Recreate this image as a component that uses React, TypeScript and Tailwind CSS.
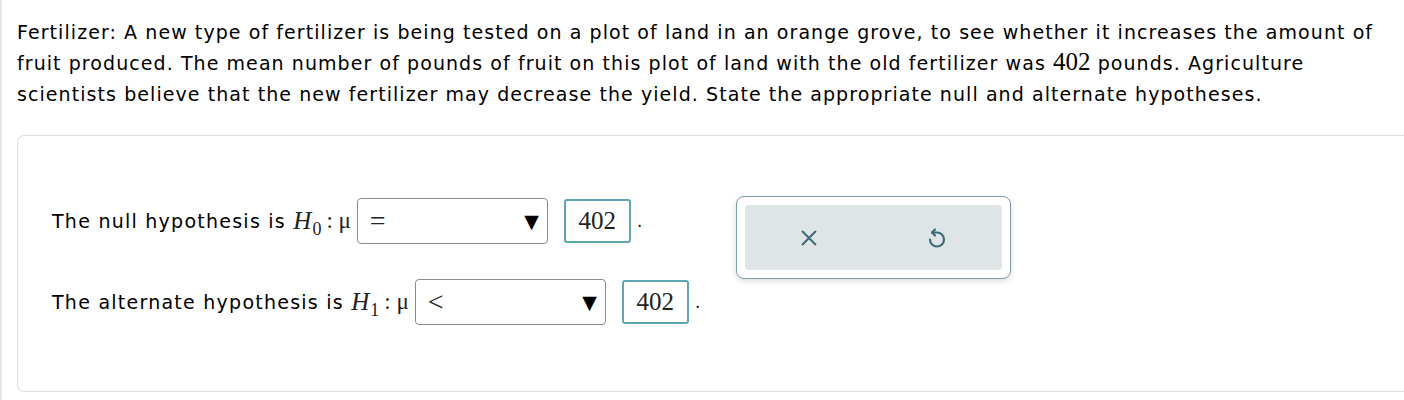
import React from 'react';

function Select({ value }: { value: string }) {
    return (
        <div className="w-[191px] h-[46px] rounded-[4px] border border-[#8c8c8c] bg-white flex items-center justify-between pl-[12px] pr-[8px]">
            <span className="text-[28px] leading-none text-[#222] font-['Liberation_Serif',serif]">{value}</span>
            <span className="text-[19px] text-black leading-none font-['DejaVu_Sans',sans-serif]">▼</span>
        </div>
    );
}

function NumBox({ value }: { value: string }) {
    return (
        <div className="flex items-end">
            <div className="w-[67px] h-[44px] rounded-[3px] border-2 border-[#5fa6b3] flex items-center justify-center text-[25px] text-[#222] font-['Liberation_Serif',serif]">
                {value}
            </div>
            <span className="ml-[6px] mb-[9px] text-[18px] text-[#222]">.</span>
        </div>
    );
}

function Hyp({ label, sub, op }: { label: string; sub: string; op: string }) {
    return (
        <div className="flex items-center">
            <span className="text-[19px] tracking-[1.25px] text-black">{label}&nbsp;</span>
            <span className="text-[25px] italic text-[#222] font-['Liberation_Serif',serif]">H</span>
            <sub className="text-[18px] text-[#222] relative top-[8px] ml-[1px] mr-[5px] font-['Liberation_Serif',serif]">{sub}</sub>
            <span className="text-[23px] text-[#222] mr-[6px] font-['Liberation_Serif',serif]">: μ</span>
            <Select value={op} />
            <div className="ml-[16px]">
                <NumBox value="402" />
            </div>
        </div>
    );
}

export default function App() {
    return (
        <div className="w-[1404px] h-[400px] bg-white overflow-hidden flex font-['DejaVu_Sans',Verdana,sans-serif]">
            <div className="w-[2px] bg-[#e6e6e6] shrink-0" />
            <div className="flex-1 pl-[15px] pt-[17px]">
                <p className="text-[19px] leading-[31px] tracking-[1.07px] text-black whitespace-nowrap">
                    Fertilizer: A new type of fertilizer is being tested on a plot of land in an orange grove, to see whether it increases the amount of<br />
                    fruit produced. The mean number of pounds of fruit on this plot of land with the old fertilizer was <span className="text-[25px] leading-none tracking-normal font-['Liberation_Serif',serif]">402</span> pounds. Agriculture<br />
                    scientists believe that the new fertilizer may decrease the yield. State the appropriate null and alternate hypotheses.
                </p>
                <div className="mt-[25px] h-[257px] rounded-l-[7px] border border-r-0 border-[#d9dfe1] flex pl-[34px] pt-[62px]">
                    <div className="w-[684px] flex flex-col gap-[35px]">
                        <Hyp label="The null hypothesis is" sub="0" op="=" />
                        <Hyp label="The alternate hypothesis is" sub="1" op="<" />
                    </div>
                    <div className="mt-[-2px] w-[275px] h-[83px] rounded-[8px] border border-[#7e9ea6] bg-white p-[8px] shadow-[0_2px_6px_rgba(0,0,0,0.15)]">
                        <div className="w-full h-full rounded-[4px] bg-[#dfe5e7] flex items-center justify-around">
                            <svg width="22" height="22" viewBox="0 0 24 24" fill="none" stroke="#3e6b78" strokeWidth="2.2" strokeLinecap="round">
                                <path d="M5 5 L19 19 M19 5 L5 19" />
                            </svg>
                            <svg width="24" height="24" viewBox="0 0 24 24" fill="none" stroke="#3e6b78" strokeWidth="2.2" strokeLinecap="round" strokeLinejoin="round">
                                <path d="M10 3.5 L7 6.5 L10 9.5" />
                                <path d="M7 6.5 H12 A7 7 0 1 1 5 13.5" />
                            </svg>
                        </div>
                    </div>
                </div>
            </div>
        </div>
    );
}
